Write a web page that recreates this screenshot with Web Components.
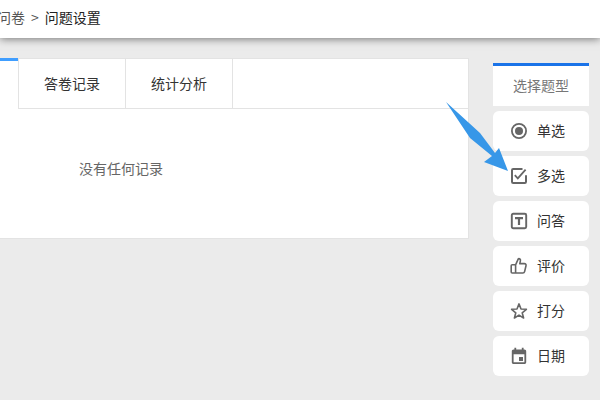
<!DOCTYPE html>
<html lang="zh"><head><meta charset="utf-8">
<style>
html,body{margin:0;padding:0;width:600px;height:400px;overflow:hidden;background:#ebebeb;font-family:"Noto Sans CJK SC","Liberation Sans",sans-serif;}
</style></head><body>
<app-page></app-page>
<script>
const fontStack='"Noto Sans CJK SC","Liberation Sans",sans-serif';
customElements.define('app-header',class extends HTMLElement{constructor(){super();this.attachShadow({mode:'open'}).innerHTML=`<style>
:host{display:block;height:38px;background:#fff;box-shadow:0 1px 8px rgba(0,0,0,.5);position:relative;z-index:2;overflow:hidden}
.c{display:flex;align-items:center;height:34px;margin-left:-3px;font-size:14px;color:#333;gap:6px;white-space:nowrap}
.m{color:#555}.a{color:#222}
</style><div class="c"><span class="m">问卷</span><span class="m">&gt;</span><span class="a">问题设置</span></div>`}});
customElements.define('tab-item',class extends HTMLElement{constructor(){super();this.attachShadow({mode:'open'}).innerHTML=`<style>
:host{display:flex;box-sizing:border-box;width:107px;height:51px;padding-bottom:2px;align-items:center;justify-content:center;font-size:14px;color:#333;border-right:1px solid #e3e3e3;border-bottom:1px solid #e3e3e3;border-top:1px solid #e3e3e3;background:#fff}
:host([first]){border-left:1px solid #e3e3e3}
:host([active]){width:18px;border:0;border-top:3px solid #409eff}
</style><slot></slot>`}});
customElements.define('record-panel',class extends HTMLElement{constructor(){super();this.attachShadow({mode:'open'}).innerHTML=`<style>
:host{display:block;box-sizing:border-box;width:469px;height:181px;background:#fff;border-right:1px solid #e3e3e3;border-bottom:1px solid #e3e3e3}
.t{display:flex;height:51px;position:relative}
.f{flex:1;border-top:1px solid #e3e3e3;border-bottom:1px solid #e3e3e3}
.e{font-size:14px;color:#666;padding:48px 0 0 79px;line-height:22px}
</style><div class="t"><tab-item active></tab-item><tab-item first style="width:108px">答卷记录</tab-item><tab-item style="width:107px">统计分析</tab-item><div class="f"></div></div><div class="e">没有任何记录</div>`}});
const ic={
radio:'<circle cx="9" cy="9" r="7.1" fill="none" stroke="#666" stroke-width="1.8"/><circle cx="9" cy="9" r="4" fill="#666"/>',
check:'<path d="M12.5 2H3.2C2.5 2 2 2.5 2 3.2V14.8C2 15.5 2.5 16 3.2 16H14.8C15.5 16 16 15.5 16 14.8V8.2" fill="none" stroke="#666" stroke-width="2"/><path d="M4.8 8.2 7.8 11.4 15.6 2.6" fill="none" stroke="#666" stroke-width="1.8"/>',
text:'<rect x="1.8" y="1.8" width="14.4" height="14.4" rx="1.4" fill="none" stroke="#666" stroke-width="1.9"/><path d="M5 5H13V7.2H10.1V13H7.9V7.2H5Z" fill="#666"/>',
thumb:'<path d="M5.6 7.8 8.4 1.7C9.7 1.4 10.7 2.4 10.4 3.8L9.8 6.6H14.4C15.6 6.6 16.3 7.6 16 8.7L14.6 14.6C14.4 15.4 13.7 16 12.9 16H5.6ZM5.6 7.8H2.2C1.7 7.8 1.2 8.2 1.2 8.8V15C1.2 15.6 1.7 16 2.2 16H5.6" fill="none" stroke="#666" stroke-width="1.6" stroke-linejoin="round"/>',
star:'<path d="M9 1.9 11 7 16.4 7.3 12.2 10.8 13.6 16 9 13.1 4.4 16 5.8 10.8 1.6 7.3 7 7Z" fill="none" stroke="#666" stroke-width="1.6" stroke-linejoin="round"/>',
cal:'<path d="M4.4 0.8H6.2V2.4H11.8V0.8H13.6V2.4H14.4C15.4 2.4 16.2 3.2 16.2 4.2V15.2C16.2 16.2 15.4 17 14.4 17H3.6C2.6 17 1.8 16.2 1.8 15.2V4.2C1.8 3.2 2.6 2.4 3.6 2.4H4.4ZM3.6 7.2V15.2H14.4V7.2Z" fill="#666" fill-rule="evenodd"/><rect x="9" y="10" width="4" height="4" fill="#666"/>'
};
customElements.define('type-item',class extends HTMLElement{constructor(){super();this.attachShadow({mode:'open'}).innerHTML=`<style>
:host{display:flex;box-sizing:border-box;width:96px;height:40px;background:#fff;border-radius:6px;align-items:center;padding:0 0 0 17px;gap:9px;font-size:14px;color:#333}
svg{width:18px;height:18px;flex:none}
span{position:relative;top:-1px}
.l{margin-bottom:2px;line-height:20px}
</style><svg viewBox="0 0 18 18">${ic[this.getAttribute('icon')]}</svg><div class="l"><slot></slot></div>`}});
customElements.define('type-sidebar',class extends HTMLElement{constructor(){super();this.attachShadow({mode:'open'}).innerHTML=`<style>
:host{display:flex;flex-direction:column;gap:5px;width:96px;box-sizing:border-box}
.h{height:43px;box-sizing:border-box;border-top:3px solid #1a73e8;padding-bottom:2px;background:#fff;display:flex;align-items:center;justify-content:center;font-size:14px;color:#777}
</style><div class="h">选择题型</div><slot></slot>`}});
customElements.define('app-page',class extends HTMLElement{constructor(){super();this.attachShadow({mode:'open'}).innerHTML=`<style>
:host{display:block;position:relative;width:600px;height:400px;overflow:hidden;font-family:${fontStack}}
.m{display:flex;align-items:flex-start;padding-top:20px}
.s{margin-left:24px;margin-top:5px}
.a{position:absolute;left:0;top:0;pointer-events:none;z-index:3}
</style><app-header></app-header><div class="m"><record-panel></record-panel><type-sidebar class="s">
<type-item icon="radio">单选</type-item><type-item icon="check">多选</type-item><type-item icon="text">问答</type-item><type-item icon="thumb">评价</type-item><type-item icon="star">打分</type-item><type-item icon="cal">日期</type-item>
</type-sidebar></div>
<svg class="a" width="600" height="400"><path d="M446 102 480 133 495 153 499 148 508 171 484 162 492 156 470 138Z" fill="#3797e8"/></svg>`}});
</script></body></html>
